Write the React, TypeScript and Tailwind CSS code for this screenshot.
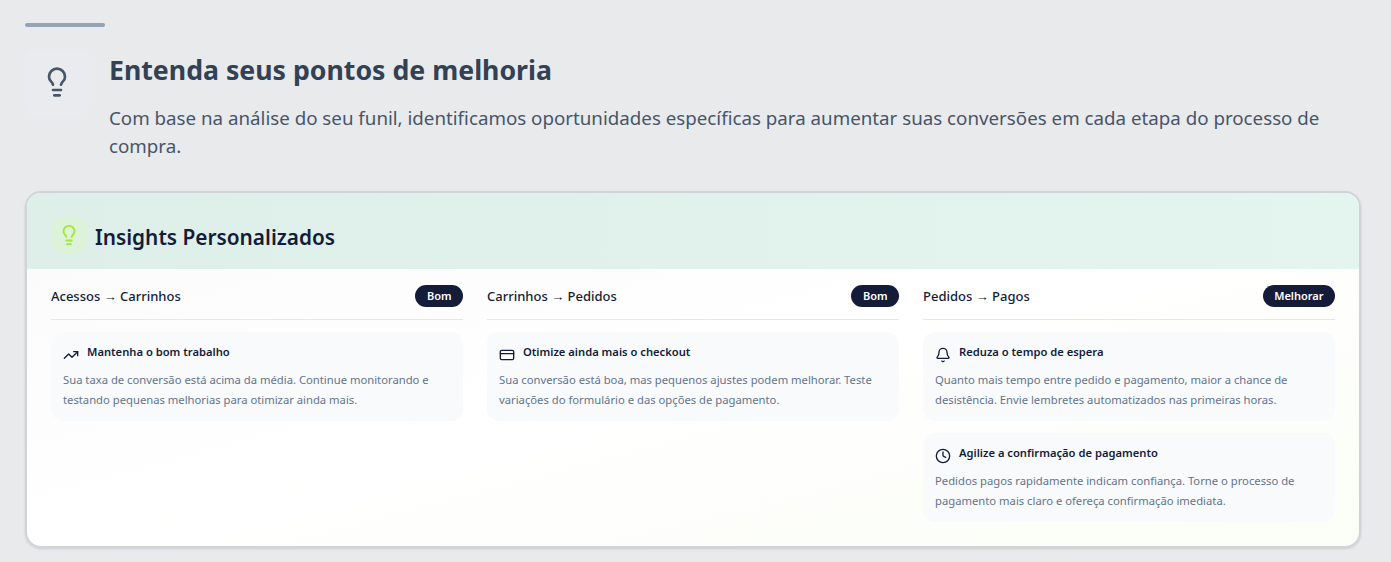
import React from "react";
import { Bell, Clock, CreditCard, Lightbulb, TrendingUp } from "lucide-react";

type Tip = {
  icon: React.ComponentType<{ className?: string }>;
  title: string;
  text: string;
};

type Column = {
  name: string;
  badge: string;
  tips: Tip[];
};

const columns: Column[] = [
  {
    name: "Acessos → Carrinhos",
    badge: "Bom",
    tips: [
      {
        icon: TrendingUp,
        title: "Mantenha o bom trabalho",
        text: "Sua taxa de conversão está acima da média. Continue monitorando e testando pequenas melhorias para otimizar ainda mais.",
      },
    ],
  },
  {
    name: "Carrinhos → Pedidos",
    badge: "Bom",
    tips: [
      {
        icon: CreditCard,
        title: "Otimize ainda mais o checkout",
        text: "Sua conversão está boa, mas pequenos ajustes podem melhorar. Teste variações do formulário e das opções de pagamento.",
      },
    ],
  },
  {
    name: "Pedidos → Pagos",
    badge: "Melhorar",
    tips: [
      {
        icon: Bell,
        title: "Reduza o tempo de espera",
        text: "Quanto mais tempo entre pedido e pagamento, maior a chance de desistência. Envie lembretes automatizados nas primeiras horas.",
      },
      {
        icon: Clock,
        title: "Agilize a confirmação de pagamento",
        text: "Pedidos pagos rapidamente indicam confiança. Torne o processo de pagamento mais claro e ofereça confirmação imediata.",
      },
    ],
  },
];

const TipCard = ({ tip }: { tip: Tip }) => {
  const Icon = tip.icon;
  return (
    <div className="rounded-xl bg-[#f8fafc] p-3">
      <div className="flex gap-2">
        <Icon className="mt-[3px] h-4 w-4 shrink-0 text-[#141c3a]" />
        <h4 className="text-[11.2px] leading-4 font-semibold text-[#141c3a]">{tip.title}</h4>
      </div>
      <p className="mt-[7px] text-[11.25px] leading-[19.5px] text-[#64748b]">{tip.text}</p>
    </div>
  );
};

export default function App() {
  return (
    <div className="h-[562px] overflow-hidden bg-[#e9eaec] pt-[23px] pr-[30px] pl-[25px] font-['Noto_Sans',sans-serif]">
      <div className="h-1 w-20 rounded-full bg-[#94a3b8]" />

      <div className="mt-[23px] flex gap-5">
        <div className="flex h-16 w-16 shrink-0 items-center justify-center rounded-lg bg-[#e9ebee]">
          <Lightbulb className="h-8 w-8 text-[#475569]" strokeWidth={2} />
        </div>
        <div>
          <h2 className="text-[26.7px] leading-10 font-bold text-[#334155]">
            Entenda seus pontos de melhoria
          </h2>
          <p className="mt-[14px] text-[18.74px] leading-7 text-[#475569]">
            Com base na análise do seu funil, identificamos oportunidades específicas para aumentar
            suas conversões em cada etapa do processo de compra.
          </p>
        </div>
      </div>

      <div className="mt-[31px] overflow-hidden rounded-2xl border-2 border-[#d1d3d8] bg-gradient-to-br from-[#fafafa] via-white to-[#fbfef6] shadow-sm">
        <div className="flex h-[76px] items-center gap-2 bg-gradient-to-r from-[#ddefe8] to-[#e3f5ee] px-6 pt-6 pb-4">
          <div className="flex h-9 w-9 items-center justify-center rounded-xl bg-[#dcf3d9]">
            <Lightbulb className="h-[22px] w-[22px] text-[#a3e635]" />
          </div>
          <h3 className="mt-[3px] text-[20.8px] leading-7 font-semibold text-[#141c3a]">
            Insights Personalizados
          </h3>
        </div>

        <div className="grid grid-cols-3 gap-6 p-6 pt-4">
          {columns.map((col) => (
            <div key={col.name}>
              <div className="flex h-[35px] items-start justify-between border-b border-[#e2e8f0]">
                <span className="text-[13px] leading-[22px] font-medium text-[#141c3a]">
                  {col.name}
                </span>
                <span className="rounded-full bg-[#141c3a] px-[11.5px] py-[2px] text-[11px] leading-[18px] font-semibold text-white">
                  {col.badge}
                </span>
              </div>
              <div className="mt-3 flex flex-col gap-3">
                {col.tips.map((tip) => (
                  <TipCard key={tip.title} tip={tip} />
                ))}
              </div>
            </div>
          ))}
        </div>
      </div>
    </div>
  );
}
